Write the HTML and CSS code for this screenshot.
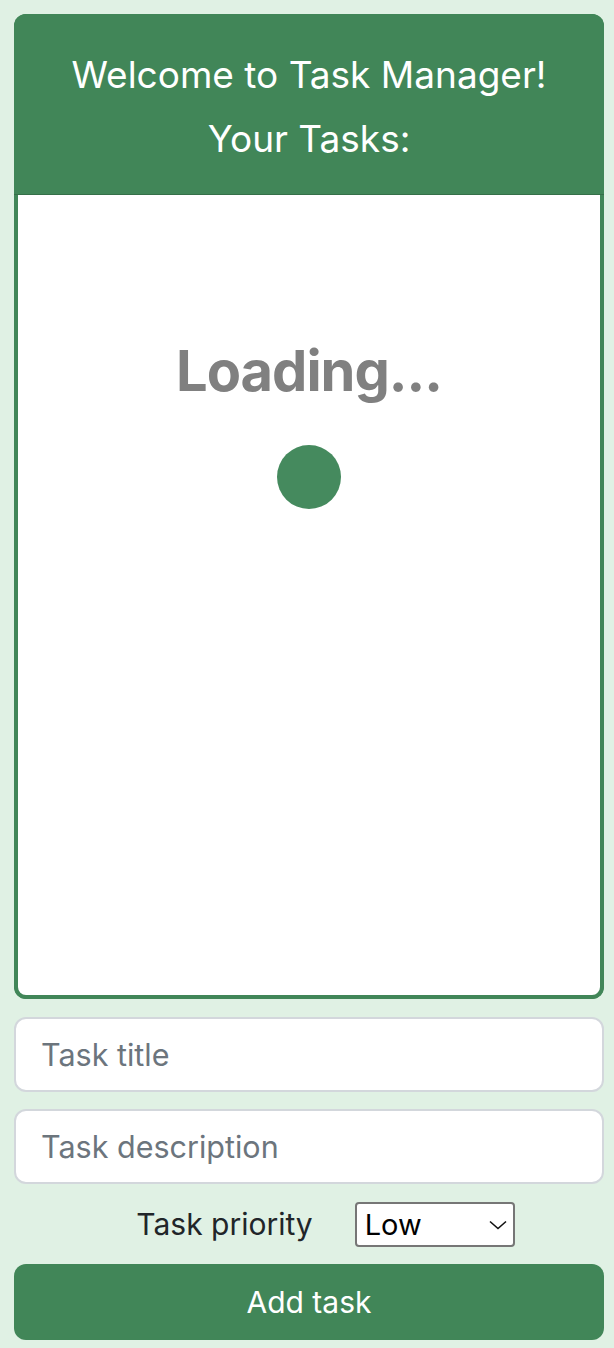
FILE: index.html
```html
<!DOCTYPE html>
<html>
<head>
<meta charset="utf-8">
<link rel="stylesheet" href="styles.css">
</head>
<body>
<div class="app">
  <div class="card">
    <header class="card-header">
      <h1 class="title">Welcome to Task Manager!</h1>
      <h2 class="subtitle">Your Tasks:</h2>
    </header>
    <section class="tasks">
      <div class="loading">Loading...</div>
      <div class="spinner"></div>
    </section>
  </div>
  <form class="task-form">
    <input class="field" type="text" placeholder="Task title">
    <input class="field" type="text" placeholder="Task description">
    <div class="priority-row">
      <label class="priority-label">Task priority</label>
      <div class="select-wrap">
        <select class="priority-select">
          <option>Low</option>
          <option>Medium</option>
          <option>High</option>
        </select>
        <svg class="select-arrow" width="18" height="10" viewBox="0 0 18 10"><path d="M1 1.5 L9 8.5 L17 1.5" fill="none" stroke="#111" stroke-width="1.6"/></svg>
      </div>
    </div>
    <button class="add-btn" type="button">Add task</button>
  </form>
</div>
</body>
</html>
```
FILE: styles.css
```css
* { box-sizing: border-box; }
html, body {
  margin: 0;
  padding: 0;
  background: #e0f1e4;
  font-family: Inter, "Noto Sans", sans-serif;
}
.app {
  padding: 14px 10px 8px 14px;
  display: flex;
  flex-direction: column;
}
.card {
  display: flex;
  flex-direction: column;
  border-radius: 12px;
  overflow: hidden;
  background: #418658;
}
.card-header {
  height: 181px;
  background: #418658;
  color: #fff;
  text-align: center;
  border-bottom: 1px solid #356f48;
  padding-top: 38px;
}
.title {
  margin: 0;
  font-size: 37px;
  font-weight: 400;
  line-height: 46px;
}
.subtitle {
  margin: 18px 0 0;
  font-size: 37px;
  font-weight: 400;
  line-height: 46px;
}
.tasks {
  height: 804px;
  background: #fff;
  border: 4px solid #418658;
  border-top: none;
  border-radius: 0 0 12px 12px;
  display: flex;
  flex-direction: column;
  align-items: center;
  padding-top: 142px;
}
.loading {
  font-size: 56px;
  font-weight: 700;
  color: #808080;
  line-height: 68px;
  letter-spacing: -1px;
}
.spinner {
  margin-top: 40px;
  width: 64px;
  height: 64px;
  border-radius: 50%;
  background: #458a5e;
}
.task-form {
  display: flex;
  flex-direction: column;
  margin-top: 18px;
}
.field {
  height: 75px;
  border: 2px solid #d3d7dc;
  border-radius: 12px;
  background: #fff;
  padding: 0 25px;
  font-family: Inter, "Noto Sans", sans-serif;
  font-size: 30.5px;
  color: #212529;
  margin-bottom: 17px;
  outline: none;
}
.field::placeholder { color: #6c757d; }
.priority-row {
  display: flex;
  justify-content: center;
  align-items: center;
  gap: 42px;
  height: 46px;
  padding-left: 33px;
}
.priority-label {
  font-size: 30px;
  color: #212529;
}
.select-wrap {
  position: relative;
  width: 160px;
  height: 45px;
}
.priority-select {
  appearance: none;
  -webkit-appearance: none;
  width: 160px;
  height: 45px;
  font-family: Inter, "Noto Sans", sans-serif;
  font-size: 29px;
  color: #000;
  background: #fff;
  border: 2px solid #767676;
  border-radius: 4px;
  padding: 0 8px;
}
.select-arrow {
  position: absolute;
  right: 8px;
  top: 18px;
  pointer-events: none;
}
.add-btn {
  margin-top: 17px;
  height: 76px;
  border: none;
  border-radius: 12px;
  background: #418658;
  color: #fff;
  font-family: Inter, "Noto Sans", sans-serif;
  font-size: 30px;
}
```
